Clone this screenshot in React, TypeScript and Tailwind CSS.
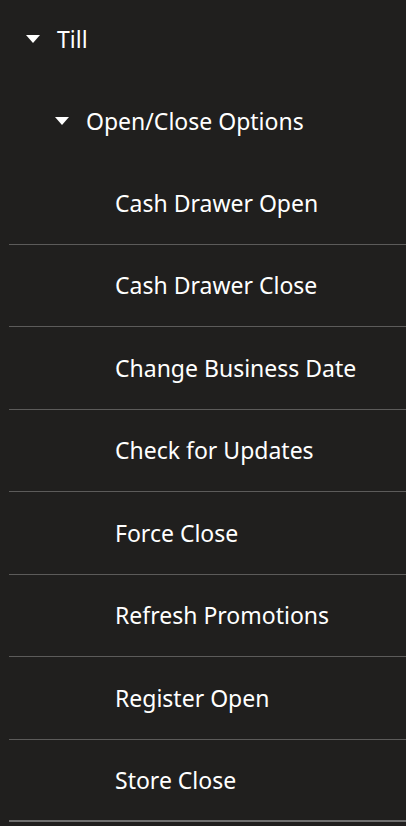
import React from 'react';

const items = [
  'Cash Drawer Open',
  'Cash Drawer Close',
  'Change Business Date',
  'Check for Updates',
  'Force Close',
  'Refresh Promotions',
  'Register Open',
  'Store Close',
];

function Caret() {
  return (
    <svg width="14" height="8" viewBox="0 0 14 8" className="shrink-0">
      <path d="M0 0 H14 L7 8 Z" fill="#ffffff" />
    </svg>
  );
}

export default function App() {
  return (
    <div
      className="min-h-[826px] w-[406px] overflow-hidden bg-[#201f1e] text-white text-[23px]"
      style={{ fontFamily: '"Noto Sans", "Open Sans", sans-serif' }}
    >
      <div className="-mt-[2px] pl-[9px]">
        <div className="flex h-[82px] items-center gap-[17px] pl-[17px]">
          <Caret />
          <span>Till</span>
        </div>
        <div className="flex h-[82px] items-center gap-[17px] pl-[46px]">
          <Caret />
          <span>Open/Close Options</span>
        </div>
        {items.map((item, i) => (
          <div
            key={item}
            className={
              'flex h-[82.5px] items-center pl-[106px] ' +
              (i === items.length - 1
                ? 'border-b-2 border-[#6f6f6f]'
                : 'border-b border-[#5c5b5a]')
            }
          >
            {item}
          </div>
        ))}
      </div>
    </div>
  );
}
